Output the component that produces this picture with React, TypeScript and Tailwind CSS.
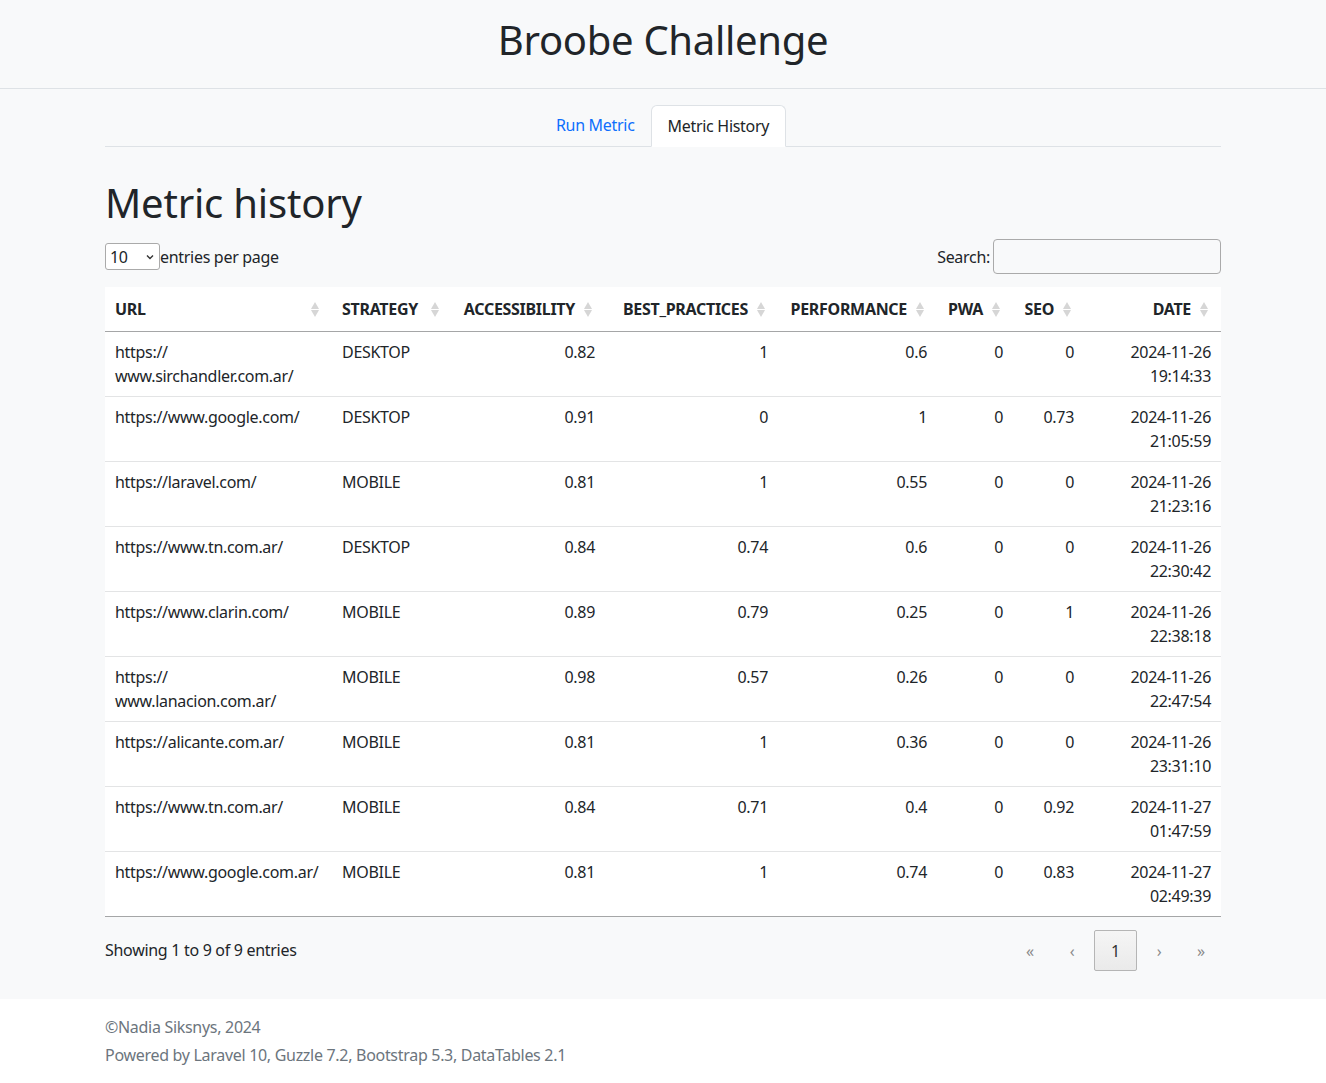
const rows = [
  { url: "https://\u200Bwww.sirchandler.com.ar/", strategy: "DESKTOP", acc: "0.82", bp: "1", perf: "0.6", pwa: "0", seo: "0", date: "2024-11-26", time: "19:14:33" },
  { url: "https://www.google.com/", strategy: "DESKTOP", acc: "0.91", bp: "0", perf: "1", pwa: "0", seo: "0.73", date: "2024-11-26", time: "21:05:59" },
  { url: "https://laravel.com/", strategy: "MOBILE", acc: "0.81", bp: "1", perf: "0.55", pwa: "0", seo: "0", date: "2024-11-26", time: "21:23:16" },
  { url: "https://www.tn.com.ar/", strategy: "DESKTOP", acc: "0.84", bp: "0.74", perf: "0.6", pwa: "0", seo: "0", date: "2024-11-26", time: "22:30:42" },
  { url: "https://www.clarin.com/", strategy: "MOBILE", acc: "0.89", bp: "0.79", perf: "0.25", pwa: "0", seo: "1", date: "2024-11-26", time: "22:38:18" },
  { url: "https://\u200Bwww.lanacion.com.ar/", strategy: "MOBILE", acc: "0.98", bp: "0.57", perf: "0.26", pwa: "0", seo: "0", date: "2024-11-26", time: "22:47:54" },
  { url: "https://alicante.com.ar/", strategy: "MOBILE", acc: "0.81", bp: "1", perf: "0.36", pwa: "0", seo: "0", date: "2024-11-26", time: "23:31:10" },
  { url: "https://www.tn.com.ar/", strategy: "MOBILE", acc: "0.84", bp: "0.71", perf: "0.4", pwa: "0", seo: "0.92", date: "2024-11-27", time: "01:47:59" },
  { url: "https://www.google.com.ar/", strategy: "MOBILE", acc: "0.81", bp: "1", perf: "0.74", pwa: "0", seo: "0.83", date: "2024-11-27", time: "02:49:39" },
];

const cols = [
  { label: "URL", w: "w-[227px]", right: false },
  { label: "STRATEGY", w: "w-[120px]", right: false },
  { label: "ACCESSIBILITY", w: "w-[153px]", right: true },
  { label: "BEST_PRACTICES", w: "w-[173px]", right: true },
  { label: "PERFORMANCE", w: "w-[159px]", right: true },
  { label: "PWA", w: "w-[76px]", right: true },
  { label: "SEO", w: "w-[71px]", right: true },
  { label: "DATE", w: "w-[137px]", right: true },
];

function SortIcon() {
  return (
    <span className="absolute right-[12px] top-0 bottom-0 flex w-[10px] flex-col items-center justify-center gap-[1px]">
      <span className="h-0 w-0 border-x-[4px] border-b-[7px] border-x-transparent border-b-[#d6d6d6]" />
      <span className="h-0 w-0 border-x-[4px] border-t-[7px] border-x-transparent border-t-[#d6d6d6]" />
    </span>
  );
}

export default function App() {
  return (
    <div className="min-h-screen bg-[#f8f9fa] text-[16px] leading-6 text-[#212529] [font-family:'Noto_Sans',sans-serif] tracking-[-0.3px]">
      <header className="flex h-[89px] items-center justify-center border-b border-[#dee2e6] pb-[8px]">
        <h1 className="text-[40px] leading-[48px] font-normal tracking-[-0.3px]">Broobe Challenge</h1>
      </header>

      <main className="mx-auto w-[1116px] pt-4 pb-7">
        <nav className="flex justify-center border-b border-[#dee2e6]">
          <a className="px-4 py-2 text-[#0d6efd]">Run Metric</a>
          <a className="-mb-px rounded-t-md border border-[#dee2e6] border-b-white bg-white px-4 py-2">Metric History</a>
        </nav>

        <h2 className="mt-[32px] text-[40px] leading-[48px] font-normal tracking-[-0.2px]">Metric history</h2>

        <div className="mt-[12px] flex items-center justify-between">
          <label className="flex items-center">
            <span className="flex h-[27px] w-[55px] items-center justify-between rounded-[3px] border border-[#aaa] bg-white px-[4px]">
              <span>10</span>
              <svg width="10" height="10" viewBox="0 0 10 10"><path d="M2 3.5 L5 6.5 L8 3.5" fill="none" stroke="#333" strokeWidth="1.4" /></svg>
            </span>
            <span>entries per page</span>
          </label>
          <label className="flex items-center gap-[3px]">
            <span>Search:</span>
            <span className="block h-[35px] w-[228px] rounded-[4px] border border-[#aaa] bg-[#f8f9fa]" />
          </label>
        </div>

        <table className="mt-[13px] w-full table-fixed border-collapse bg-white">
          <thead>
            <tr className="border-b border-[#a5a6a7]">
              {cols.map((c) => (
                <th key={c.label} className={`relative ${c.w} py-[10px] pl-[10px] pr-[30px] font-bold ${c.right ? "text-right" : "text-left"}`}>
                  {c.label}
                  <SortIcon />
                </th>
              ))}
            </tr>
          </thead>
          <tbody>
            {rows.map((r, i) => (
              <tr key={i} className={i === rows.length - 1 ? "border-b border-[#a5a6a7]" : "border-b border-[#e3e4e5]"}>
                <td className="h-[64px] px-[10px] py-[8px] align-top">{r.url}</td>
                <td className="px-[10px] py-[8px] align-top">{r.strategy}</td>
                <td className="px-[10px] py-[8px] text-right align-top">{r.acc}</td>
                <td className="px-[10px] py-[8px] text-right align-top">{r.bp}</td>
                <td className="px-[10px] py-[8px] text-right align-top">{r.perf}</td>
                <td className="px-[10px] py-[8px] text-right align-top">{r.pwa}</td>
                <td className="px-[10px] py-[8px] text-right align-top">{r.seo}</td>
                <td className="px-[10px] py-[8px] text-right align-top">
                  <div>{r.date}</div>
                  <div>{r.time}</div>
                </td>
              </tr>
            ))}
          </tbody>
        </table>

        <div className="mt-[13px] flex items-center justify-between">
          <span className="-mt-[2px]">Showing 1 to 9 of 9 entries</span>
          <div className="flex items-center gap-[2px] text-[#8a8a8a]">
            <span className="flex h-[40px] w-[40px] items-center justify-center">«</span>
            <span className="flex h-[40px] w-[40px] items-center justify-center">‹</span>
            <span className="flex h-[41px] w-[43px] items-center justify-center rounded-[2px] border border-[#b5b5b5] bg-gradient-to-b from-[#f5f5f5] to-[#eaeaea] text-[#333]">1</span>
            <span className="flex h-[40px] w-[40px] items-center justify-center">›</span>
            <span className="flex h-[40px] w-[40px] items-center justify-center">»</span>
          </div>
        </div>
      </main>

      <footer className="bg-white pt-[14px] pb-[16px]">
        <div className="mx-auto w-[1116px] leading-[28px] text-[#6c757d]">
          <p>©Nadia Siksnys, 2024</p>
          <p>Powered by Laravel 10, Guzzle 7.2, Bootstrap 5.3, DataTables 2.1</p>
        </div>
      </footer>
    </div>
  );
}
